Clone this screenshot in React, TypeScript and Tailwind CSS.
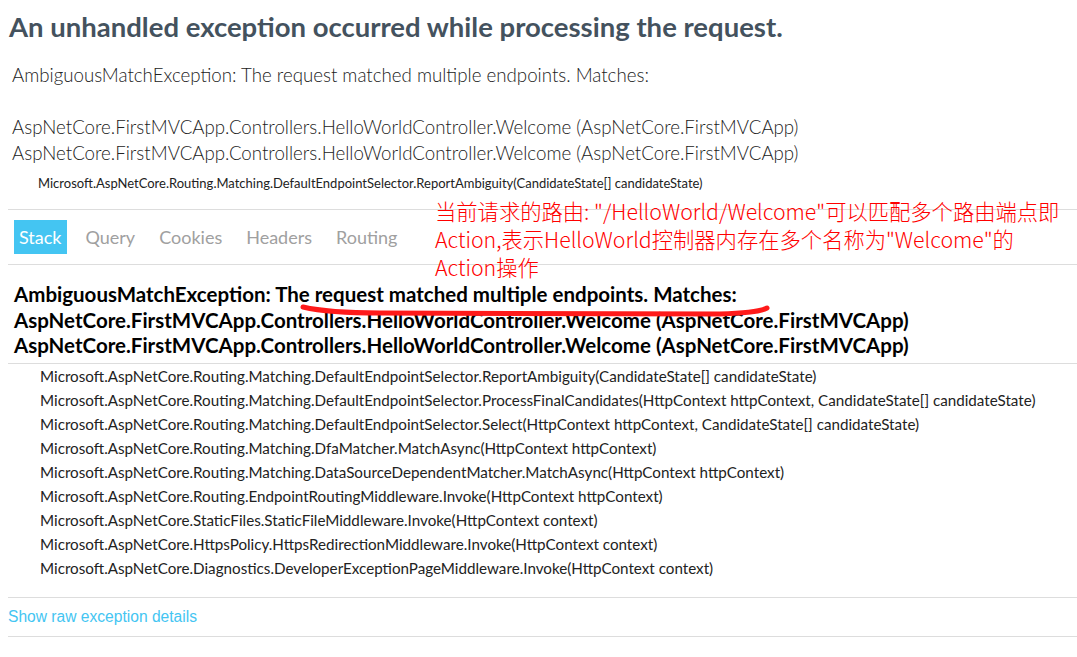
import React from "react";

const frames = [
  "Microsoft.AspNetCore.Routing.Matching.DefaultEndpointSelector.ReportAmbiguity(CandidateState[] candidateState)",
  "Microsoft.AspNetCore.Routing.Matching.DefaultEndpointSelector.ProcessFinalCandidates(HttpContext httpContext, CandidateState[] candidateState)",
  "Microsoft.AspNetCore.Routing.Matching.DefaultEndpointSelector.Select(HttpContext httpContext, CandidateState[] candidateState)",
  "Microsoft.AspNetCore.Routing.Matching.DfaMatcher.MatchAsync(HttpContext httpContext)",
  "Microsoft.AspNetCore.Routing.Matching.DataSourceDependentMatcher.MatchAsync(HttpContext httpContext)",
  "Microsoft.AspNetCore.Routing.EndpointRoutingMiddleware.Invoke(HttpContext httpContext)",
  "Microsoft.AspNetCore.StaticFiles.StaticFileMiddleware.Invoke(HttpContext context)",
  "Microsoft.AspNetCore.HttpsPolicy.HttpsRedirectionMiddleware.Invoke(HttpContext context)",
  "Microsoft.AspNetCore.Diagnostics.DeveloperExceptionPageMiddleware.Invoke(HttpContext context)",
];

const tabs = ["Stack", "Query", "Cookies", "Headers", "Routing"];

const match =
  "AspNetCore.FirstMVCApp.Controllers.HelloWorldController.Welcome (AspNetCore.FirstMVCApp)";

export default function App() {
  return (
    <div className="relative min-h-screen bg-white pl-2 pt-[11px] text-[#222] font-[Lato,'Noto_Sans',sans-serif]">
      <h1 className="text-[27.5px] leading-[32px] font-bold text-[#44525e] pl-px">
        An unhandled exception occurred while processing the request.
      </h1>

      <div className="mt-[19px] pl-1 text-[18.7px] leading-[26px] font-light text-[#222]">
        <div>AmbiguousMatchException: The request matched multiple endpoints. Matches:</div>
        <div>&nbsp;</div>
        <div>{match}</div>
        <div>{match}</div>
      </div>

      <div className="mt-2 ml-[30px] text-[13px] leading-[18px] text-[#222]">
        {frames[0]}
      </div>

      {/* tab strip */}
      <ul className="mt-[17px] flex gap-[14px] border-y border-[#ddd] py-[10px] pl-[6px] text-[18px] leading-[24px]">
        {tabs.map((t, i) => (
          <li
            key={t}
            className={
              i === 0
                ? "bg-[#44c5f2] px-[5px] py-[5px] text-white"
                : "px-[5px] py-[5px] text-[#a0a0a0]"
            }
          >
            {t}
          </li>
        ))}
      </ul>

      {/* stack page */}
      <div className="border-b border-[#ddd] pt-[17px] pb-[4px] pl-[6px] text-[20.5px] leading-[25.5px] font-bold text-black">
        <div>AmbiguousMatchException: The request matched multiple endpoints. Matches:</div>
        <div>{match}</div>
        <div>{match}</div>
      </div>

      <ul className="ml-[32px] pb-[17px] text-[15.2px] leading-[24px] text-[#222]">
        {frames.map((f, i) => (
          <li key={i}>{f}</li>
        ))}
      </ul>

      <div className="border-y border-[#ddd]">
        <button className="p-0 text-[15.6px] leading-[38px] text-[#44c5f2] font-['Liberation_Sans',Arial,sans-serif]">
          Show raw exception details
        </button>
      </div>

      {/* red annotation */}
      <div className="absolute left-[435px] top-[197px] text-[21.3px] leading-[28px] font-light text-[#ff0000] font-['Noto_Sans_CJK_SC',sans-serif]">
        <div>当前请求的路由: "/HelloWorld/Welcome"可以匹配多个路由端点即</div>
        <div>Action,表示HelloWorld控制器内存在多个名称为"Welcome"的</div>
        <div>Action操作</div>
      </div>

      <svg
        className="pointer-events-none absolute left-0 top-0"
        width="1077"
        height="657"
        viewBox="0 0 1077 657"
      >
        <path
          d="M303 307 C 320 311, 345 313, 380 313 L 720 314 C 745 313, 760 312, 767 308"
          fill="none"
          stroke="#ff1a1a"
          strokeWidth="5"
          strokeLinecap="round"
        />
      </svg>
    </div>
  );
}
